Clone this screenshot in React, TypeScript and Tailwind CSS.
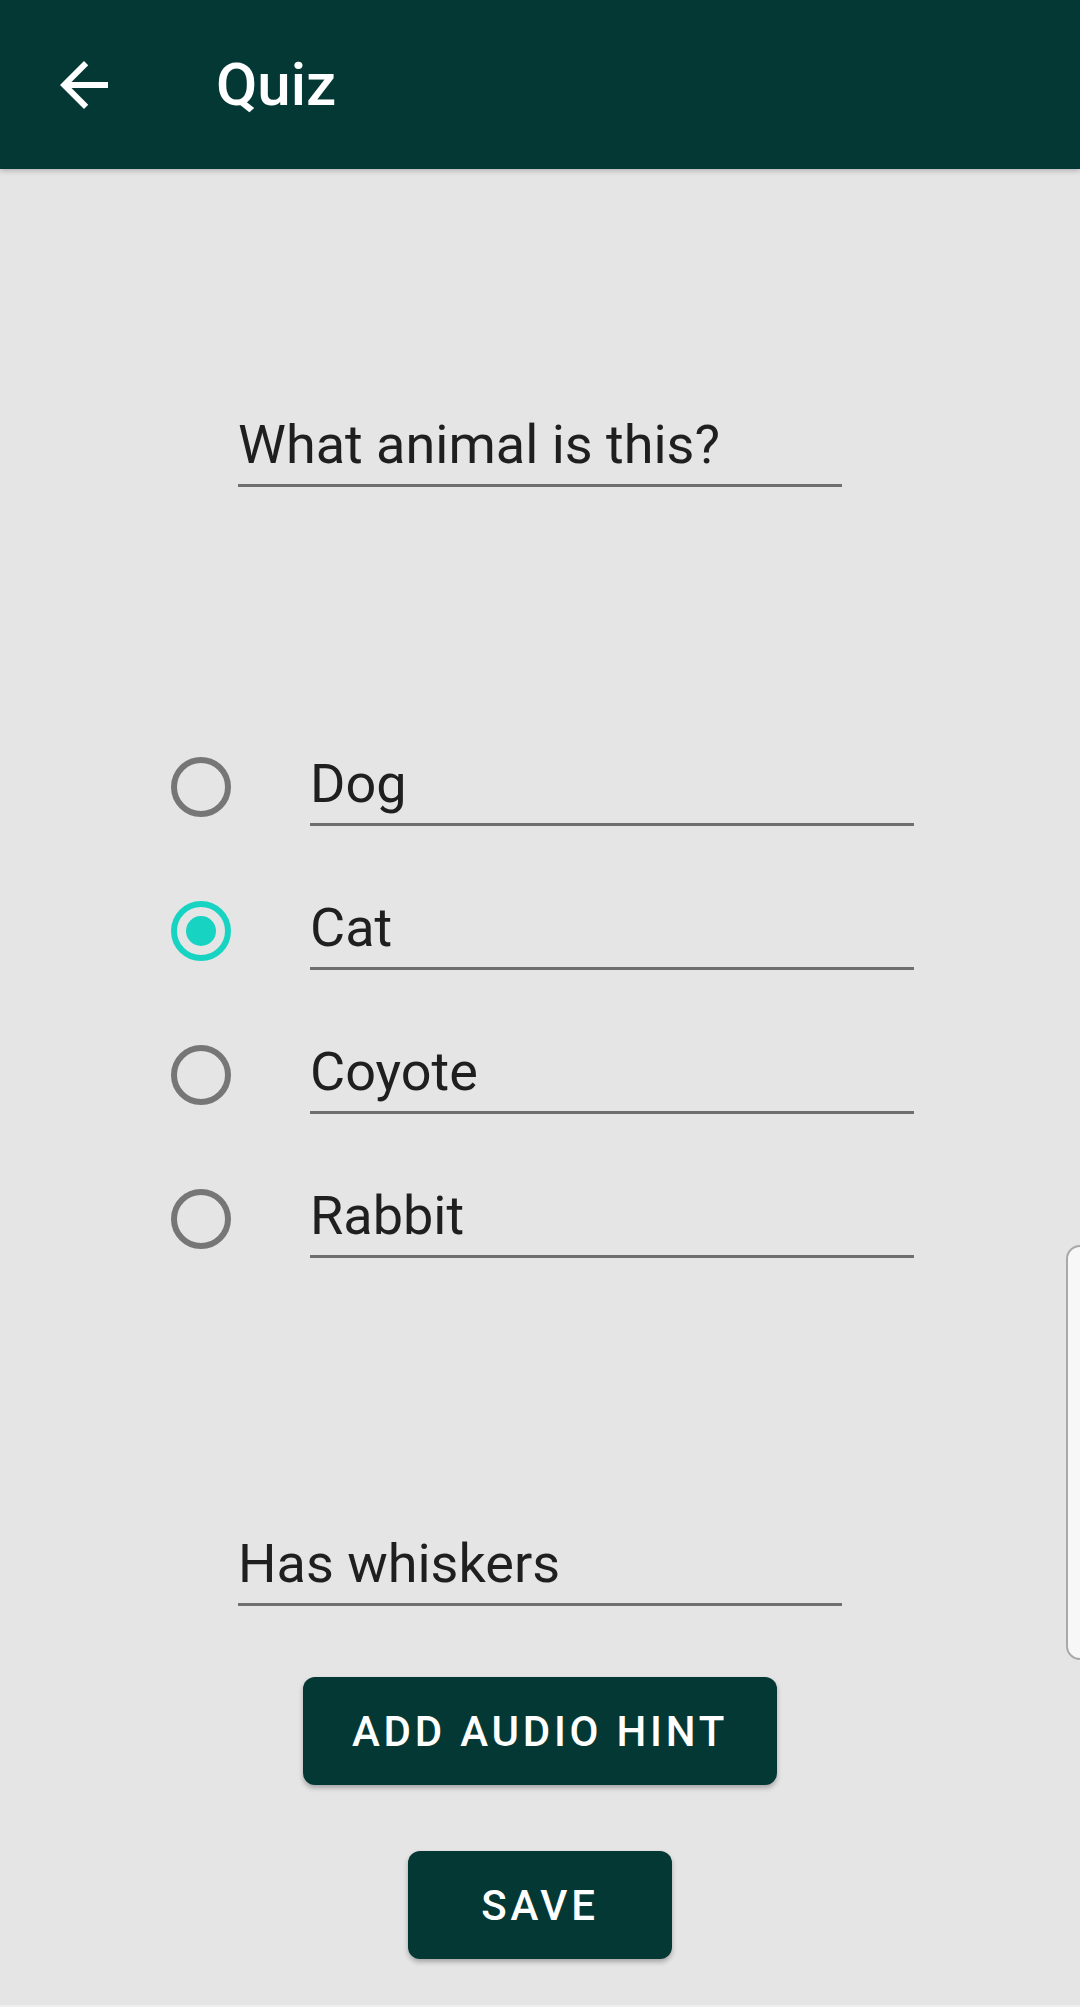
import React from "react";

function Field({ text, width }: { text: string; width: string }) {
  return (
    <div className={`${width} border-b-[3px] border-[#6f6f6f] pb-[7px]`}>
      <div className="text-[54px] leading-[64px] text-[#1f1f1f] font-['Roboto',sans-serif]">{text}</div>
    </div>
  );
}

function Radio({ checked }: { checked: boolean }) {
  return checked ? (
    <div className="w-[60px] h-[60px] rounded-full border-[6px] border-[#17d4c2] flex items-center justify-center">
      <div className="w-[30px] h-[30px] rounded-full bg-[#17d4c2]" />
    </div>
  ) : (
    <div className="w-[60px] h-[60px] rounded-full border-[6px] border-[#767676]" />
  );
}

export default function App() {
  const options = [
    { label: "Dog", checked: false },
    { label: "Cat", checked: true },
    { label: "Coyote", checked: false },
    { label: "Rabbit", checked: false },
  ];
  return (
    <div className="relative w-[1080px] h-[2007px] bg-[#e5e5e5] overflow-hidden font-['Roboto',sans-serif]">
      <div className="relative z-10 h-[169px] bg-[#033835] flex items-center shadow-[0_2px_5px_rgba(0,0,0,0.22)]">
        <div className="ml-[48px] w-[72px] h-[72px] flex items-center justify-center">
          <svg width="72" height="72" viewBox="0 0 24 24" fill="#ffffff">
            <path d="M20 11H7.83l5.59-5.59L12 4l-8 8 8 8 1.41-1.41L7.83 13H20v-2z" />
          </svg>
        </div>
        <div className="ml-[96px] text-[60px] leading-[72px] font-medium text-white">Quiz</div>
      </div>

      <div className="flex flex-col">
        <div className="mt-[244px] pl-[238px]">
          <Field text="What animal is this?" width="w-[604px]" />
        </div>

        <div className="mt-[265px] flex flex-col gap-[70px] pl-[171px]">
          {options.map((o) => (
            <div key={o.label} className="flex items-start">
              <div className="mt-[5px]">
                <Radio checked={o.checked} />
              </div>
              <div className="ml-[79px]">
                <Field text={o.label} width="w-[604px]" />
              </div>
            </div>
          ))}
        </div>

        <div className="mt-[274px] pl-[238px]">
          <Field text="Has whiskers" width="w-[604px]" />
        </div>

        <div className="mt-[71px] flex justify-center">
          <div className="w-[474px] h-[108px] rounded-[12px] bg-[#033835] flex items-center justify-center text-white text-[42px] font-medium tracking-[0.09em] shadow-[0_3px_5px_rgba(0,0,0,0.28)]">
            ADD AUDIO HINT
          </div>
        </div>
        <div className="mt-[66px] flex justify-center">
          <div className="w-[264px] h-[108px] rounded-[12px] bg-[#033835] flex items-center justify-center text-white text-[42px] font-medium tracking-[0.09em] shadow-[0_3px_5px_rgba(0,0,0,0.28)]">
            SAVE
          </div>
        </div>
      </div>

      <div className="absolute right-[-20px] top-[1245px] w-[34px] h-[415px] rounded-[14px] border-2 border-[#a9a9a9] bg-[#f7f7f7]" />
      <div className="absolute left-0 bottom-0 w-full h-[2px] bg-[#efefef]" />
    </div>
  );
}
